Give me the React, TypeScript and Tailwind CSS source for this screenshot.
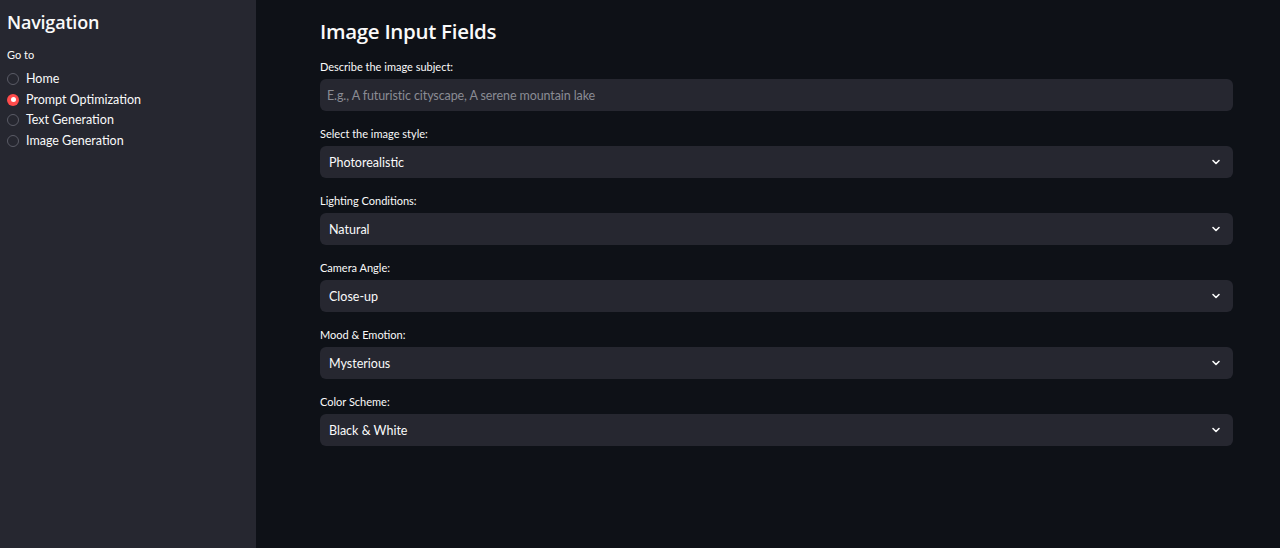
import React, { useState } from 'react'

const fields = [
  { label: 'Select the image style:', value: 'Photorealistic' },
  { label: 'Lighting Conditions:', value: 'Natural' },
  { label: 'Camera Angle:', value: 'Close-up' },
  { label: 'Mood & Emotion:', value: 'Mysterious' },
  { label: 'Color Scheme:', value: 'Black & White' }
]

const pages = ['Home', 'Prompt Optimization', 'Text Generation', 'Image Generation']

function Chevron() {
  return (
    <svg width="12" height="12" viewBox="0 0 24 24" fill="none" stroke="currentColor" strokeWidth="3.2" strokeLinecap="round" strokeLinejoin="round">
      <path d="M6 9l6 6 6-6" />
    </svg>
  )
}

export default function App() {
  const [page, setPage] = useState('Prompt Optimization')

  return (
    <div className="flex h-[548px] w-full bg-[#0e1117] text-[#fafafa] font-['Lato',sans-serif]">
      <aside className="w-[256px] shrink-0 bg-[#262730] px-[7px] pt-[9px]">
        <h2 className="font-['Open_Sans',sans-serif] text-[18px] font-semibold leading-[26px] tracking-[-0.2px]">Navigation</h2>
        <p className="mt-[13px] text-[11px] leading-[14px]">Go to</p>
        <div className="mt-[7px] flex flex-col">
          {pages.map((p) => (
            <button
              key={p}
              type="button"
              onClick={() => setPage(p)}
              className="flex h-[20.5px] items-center gap-[7px] text-left"
            >
              {page === p ? (
                <span className="flex h-[12px] w-[12px] items-center justify-center rounded-full bg-[#ff4b4b]">
                  <span className="h-[5px] w-[5px] rounded-full bg-white" />
                </span>
              ) : (
                <span className="h-[12px] w-[12px] rounded-full border border-[#5a5b66]" />
              )}
              <span className="text-[12.5px] leading-[16px]">{p}</span>
            </button>
          ))}
        </div>
      </aside>

      <main className="flex-1 pl-[64px] pr-[47px] pt-[18px]">
        <h1 className="font-['Open_Sans',sans-serif] text-[20.5px] font-semibold leading-[26px] tracking-[-0.3px]">Image Input Fields</h1>
        <div className="mt-[16px]">
          <label className="block text-[11px] leading-[14px]">Describe the image subject:</label>
          <input
            type="text"
            placeholder="E.g., A futuristic cityscape, A serene mountain lake"
            className="mt-[5px] h-[32px] w-full rounded-[6px] bg-[#262730] px-[7px] pt-[1px] text-[12.5px] tracking-[-0.1px] text-[#fafafa] outline-none placeholder:text-[#8a8c94]"
          />
        </div>
        {fields.map((f) => (
          <div key={f.label} className="mt-[16px]">
            <label className="block text-[11px] leading-[14px]">{f.label}</label>
            <div className="mt-[5px] flex h-[32px] w-full items-center justify-between rounded-[6px] bg-[#262730] pl-[9px] pr-[11px]">
              <span className="pt-[2px] text-[12.5px] leading-[16px]">{f.value}</span>
              <Chevron />
            </div>
          </div>
        ))}
      </main>
    </div>
  )
}
